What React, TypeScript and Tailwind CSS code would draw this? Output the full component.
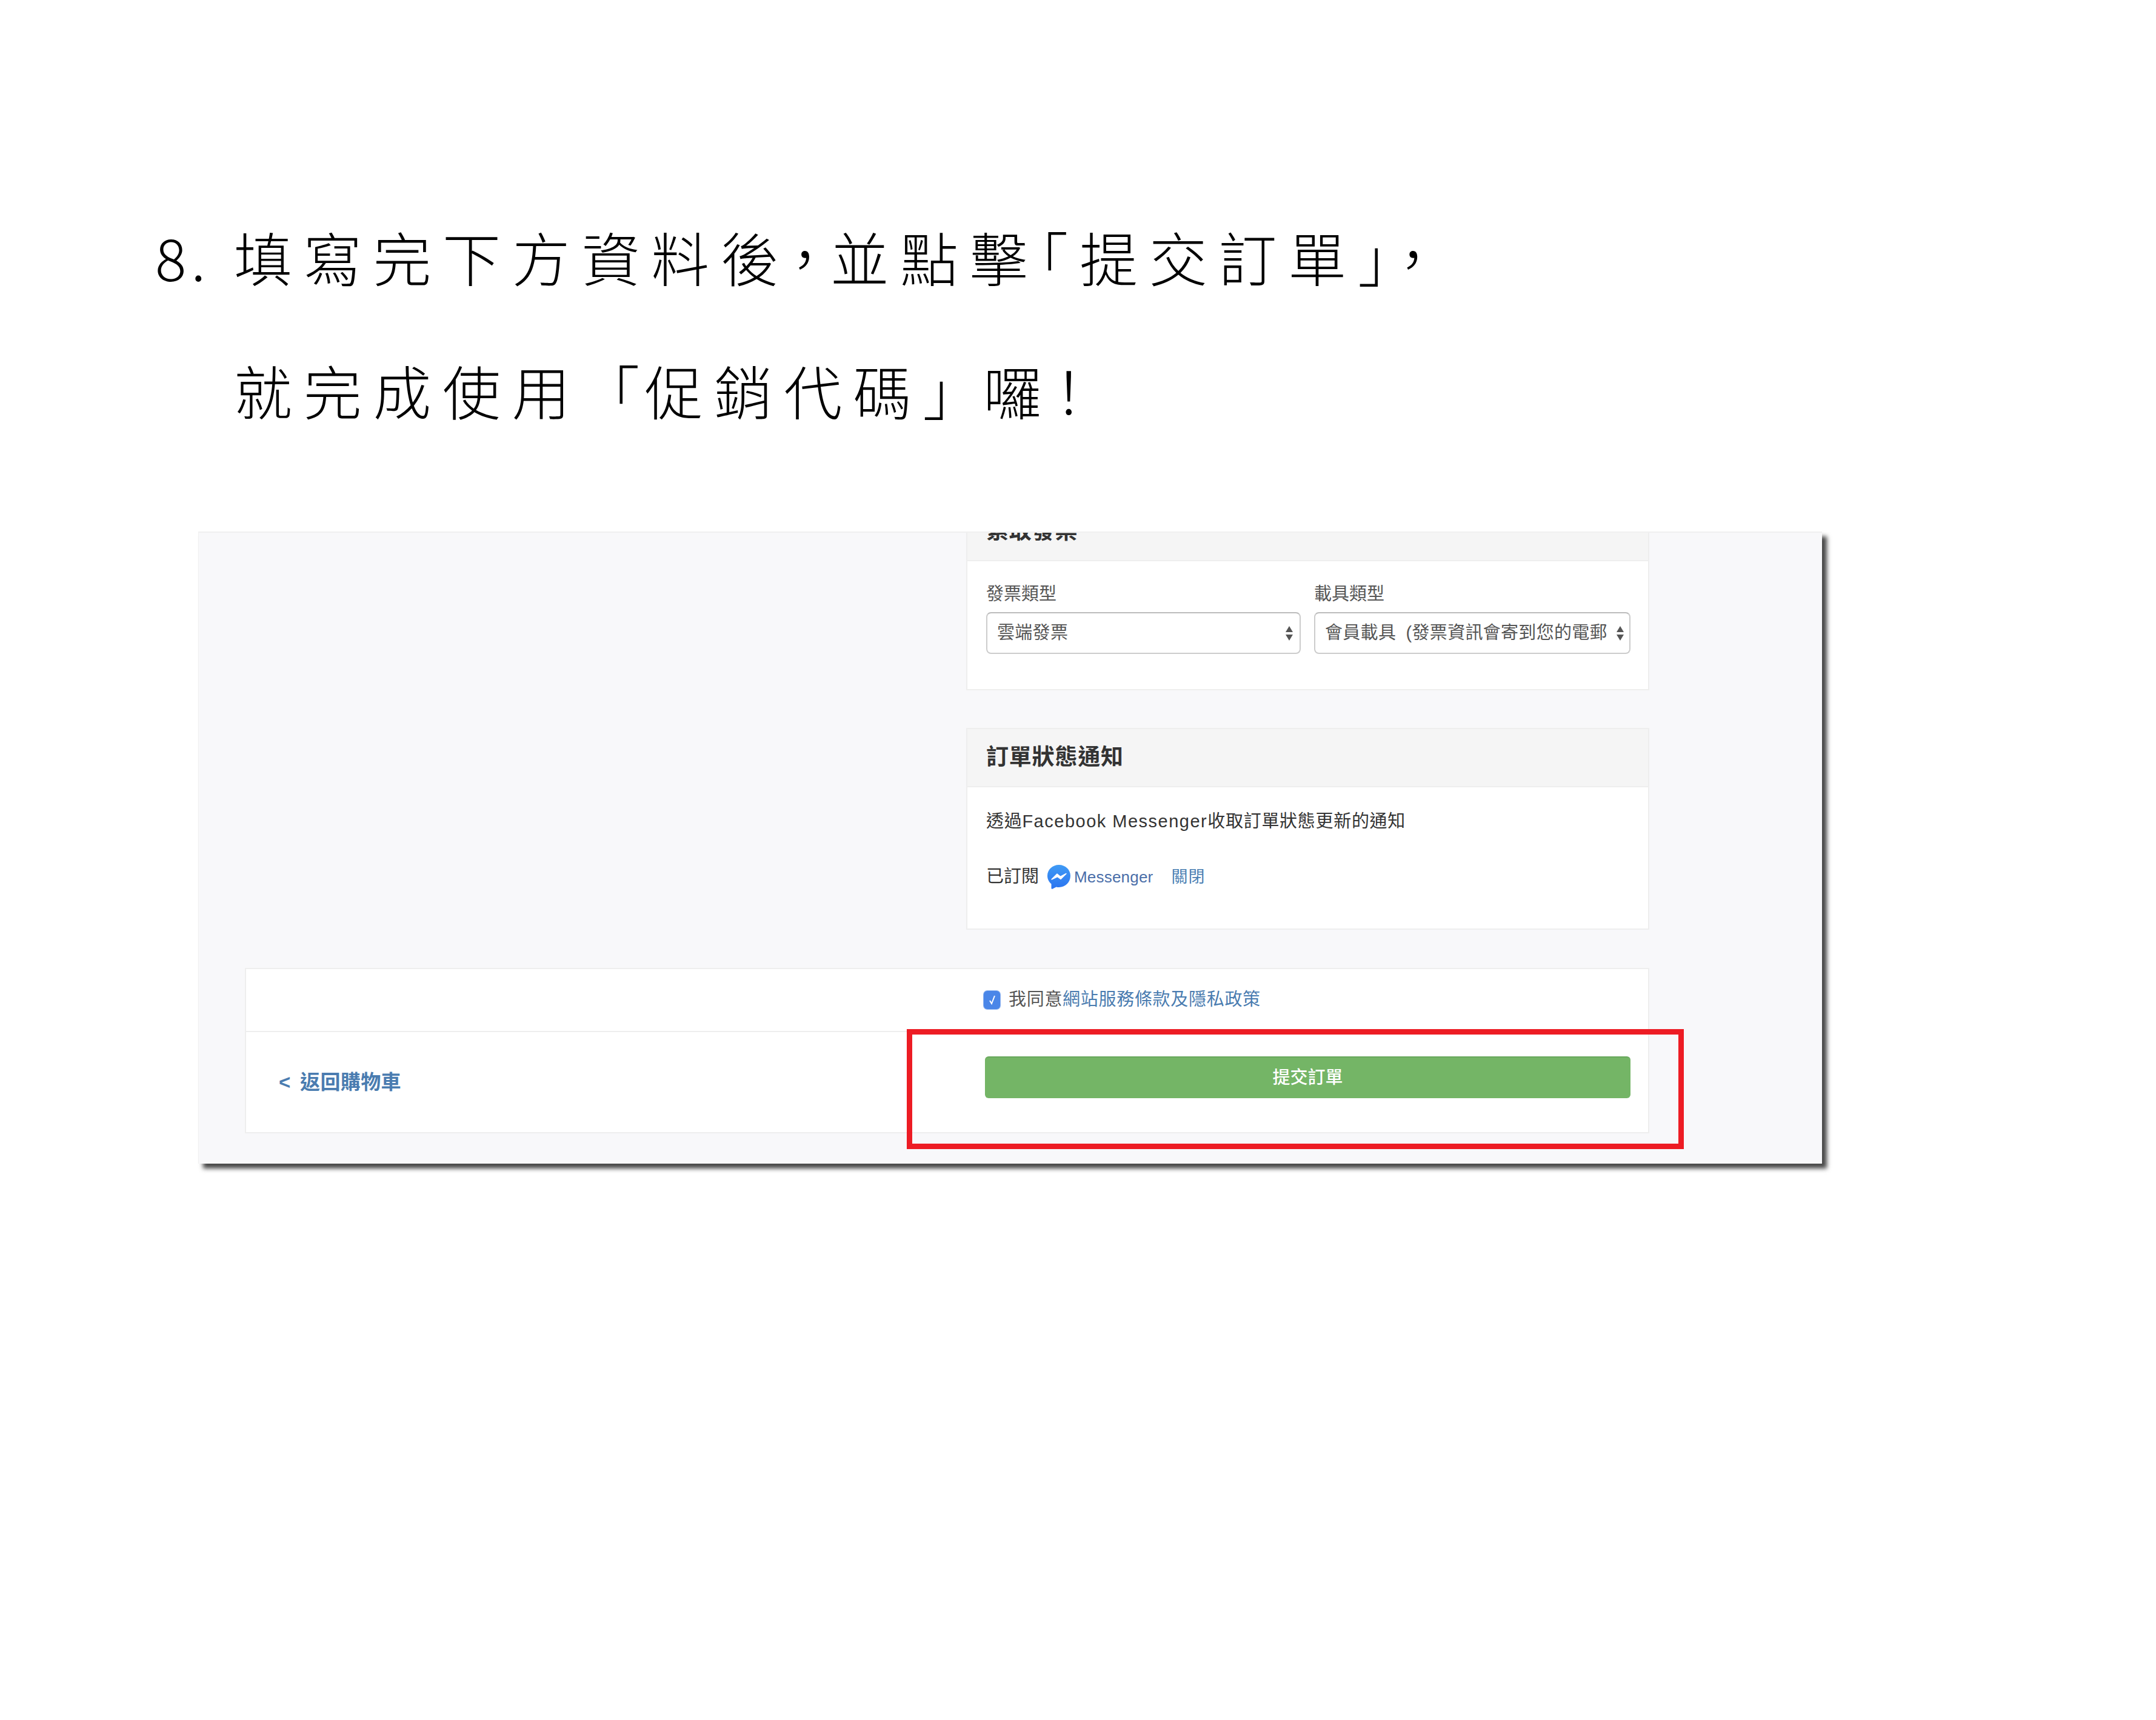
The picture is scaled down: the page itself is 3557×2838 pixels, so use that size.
import React from 'react';

const uiFont = "font-['Liberation_Sans','Noto_Sans_CJK_TC',sans-serif]";

const SelectBox = ({ children, pad }: { children: React.ReactNode; pad: string }) => (
  <div className={`flex h-[69px] items-center rounded-lg border-2 border-[#ccc] border-t-[#bbb] bg-white pl-[16px] text-[29px] tracking-[0.3px] text-[#555] ${pad}`}>
    <span className="flex-1 overflow-hidden whitespace-nowrap">{children}</span>
    <svg className="ml-[8px] shrink-0" width="14" height="26" viewBox="0 0 14 26">
      <path d="M7 1 L13 11 L1 11 Z M1 15 L13 15 L7 25 Z" fill="#555" />
    </svg>
  </div>
);

const CardHeader = ({ title }: { title: string }) => (
  <div className="flex h-[96px] items-center border-b-2 border-[#eee] bg-[#f5f5f5] px-[31px] text-[37px] font-bold tracking-[0.8px] text-[#333]">
    {title}
  </div>
);

const MessengerIcon = () => (
  <svg width="38" height="40" viewBox="0 0 38 40">
    <defs>
      <linearGradient id="msg" x1="0" y1="0" x2="0" y2="1">
        <stop offset="0" stopColor="#3f9bf5" />
        <stop offset="1" stopColor="#2b74f0" />
      </linearGradient>
    </defs>
    <path
      d="M19 0 C8.5 0 0 7.9 0 18 C0 23.5 2.5 28.3 6.5 31.6 L6.5 38.4 C6.5 39.6 7.7 40.2 8.8 39.6 L14.6 36.4 C16 36.8 17.5 37 19 37 C29.5 37 38 28.6 38 18 C38 7.9 29.5 0 19 0 Z"
      fill="url(#msg)"
    />
    <path d="M7 24 L16 15 L21.5 19.5 L31 14.5 L22 23.5 L16.5 19.5 Z" fill="#fff" stroke="#fff" strokeWidth="1.5" strokeLinejoin="round" />
  </svg>
);

export default function App() {
  return (
    <div className="h-[2838px] w-[3557px] overflow-hidden bg-white">
      {/* Heading */}
      <div className="flex pl-[256px] pt-[313px] font-['Noto_Sans_CJK_TC',sans-serif] text-[96px] font-light leading-[220px] tracking-[18.7px] text-black">
        <span className="w-[130px] shrink-0 tracking-[8px]">8.</span>
        <div className="whitespace-nowrap">
          <div>
            填寫完下方資料後<span className="[font-feature-settings:'halt']">，</span>並點擊<span className="[font-feature-settings:'halt']">「</span>提交訂單<span className="[font-feature-settings:'halt']">」，</span>
          </div>
          <div>
            就完成使用<span className="tracking-[8px]">「</span>促銷代碼<span className="tracking-[5px]">」</span><span className="tracking-[-4px]">囉</span>！
          </div>
        </div>
      </div>

      {/* Screenshot panel */}
      <div className={`relative ml-[327px] mt-[124px] h-[1043px] w-[2679px] border-t-2 border-l border-[#f0f0f0] bg-[#f8f8fa] shadow-[8px_8px_7px_rgba(0,0,0,0.72)] ${uiFont}`}>
        <div className="h-full overflow-hidden pl-[76px] pr-[285px]">
          <div className="ml-auto w-[1127px] -mt-[49px]">
            <div className="border-2 border-t-0 border-[#eee] bg-white">
              <CardHeader title="索取發票" />
              <div className="grid h-[211px] grid-cols-[519px_522px] gap-x-[22px] pl-[31px] pt-[36px] text-[#555]">
                <div>
                  <div className="mb-[12px] text-[29px] leading-[36px]">發票類型</div>
                  <SelectBox pad="pr-[10px]">雲端發票</SelectBox>
                </div>
                <div>
                  <div className="mb-[12px] text-[29px] leading-[36px]">載具類型</div>
                  <SelectBox pad="pr-[8px]">
                    會員載具 <span className="ml-[8px]">(</span>發票資訊會寄到您的電郵
                  </SelectBox>
                </div>
              </div>
            </div>

            <div className="mt-[62px] border-2 border-[#eee] bg-white">
              <CardHeader title="訂單狀態通知" />
              <div className="h-[233px] px-[31px] pt-[36px] text-[29px] text-[#333]">
                <div className="leading-[40px] tracking-[0.7px]">
                  透過<span className="tracking-[1.5px]">Facebook Messenger</span>收取訂單狀態更新的通知
                </div>
                <div className="mt-[52px] flex h-[40px] items-center">
                  <span>已訂閱</span>
                  <span className="ml-[14px] flex"><MessengerIcon /></span>
                  <span className="ml-[6px] text-[26px] tracking-[0.2px] text-[#4a6ea9]">Messenger</span>
                  <span className="ml-[30px] text-[27px] tracking-[1px] text-[#4b80b3]">關閉</span>
                </div>
              </div>
            </div>
          </div>

          {/* Bottom bar */}
          <div className="mt-[63px] border-2 border-[#eee] bg-white">
            <div className="flex h-[104px] items-center border-b-2 border-[#eee] pl-[1217px] text-[29px] tracking-[0.7px] text-[#555]">
              <span className="flex h-[30px] w-[27px] items-center justify-center rounded-md bg-[#4a86e8] ring-1 ring-[#8fb4f0]">
                <svg width="14" height="20" viewBox="0 0 14 20" fill="none">
                  <path d="M3 11 L6 16 L11 3" stroke="#fff" strokeWidth="2" />
                </svg>
              </span>
              <span className="ml-[14px]">我同意</span>
              <span className="text-[#4a7cb0]">網站服務條款及隱私政策</span>
            </div>
            <div className="flex h-[165px] items-start">
              <div className="ml-[54px] mt-[63px] flex w-[1165px] text-[33px] font-bold leading-[40px] tracking-[0.4px] text-[#4a7cb0]">
                <span className="w-[35px]">&lt;</span>
                <span>返回購物車</span>
              </div>
              <button className="mt-[40px] h-[69px] w-[1065px] rounded-md border-t-2 border-[#69a85d] bg-[#74b566] text-[29px] font-medium text-white">
                提交訂單
              </button>
            </div>
          </div>
        </div>

        {/* Red highlight */}
        <div className="absolute left-[1168px] top-[819px] h-[198px] w-[1282px] border-[9px] border-[#ed1c24]" />
      </div>
    </div>
  );
}
